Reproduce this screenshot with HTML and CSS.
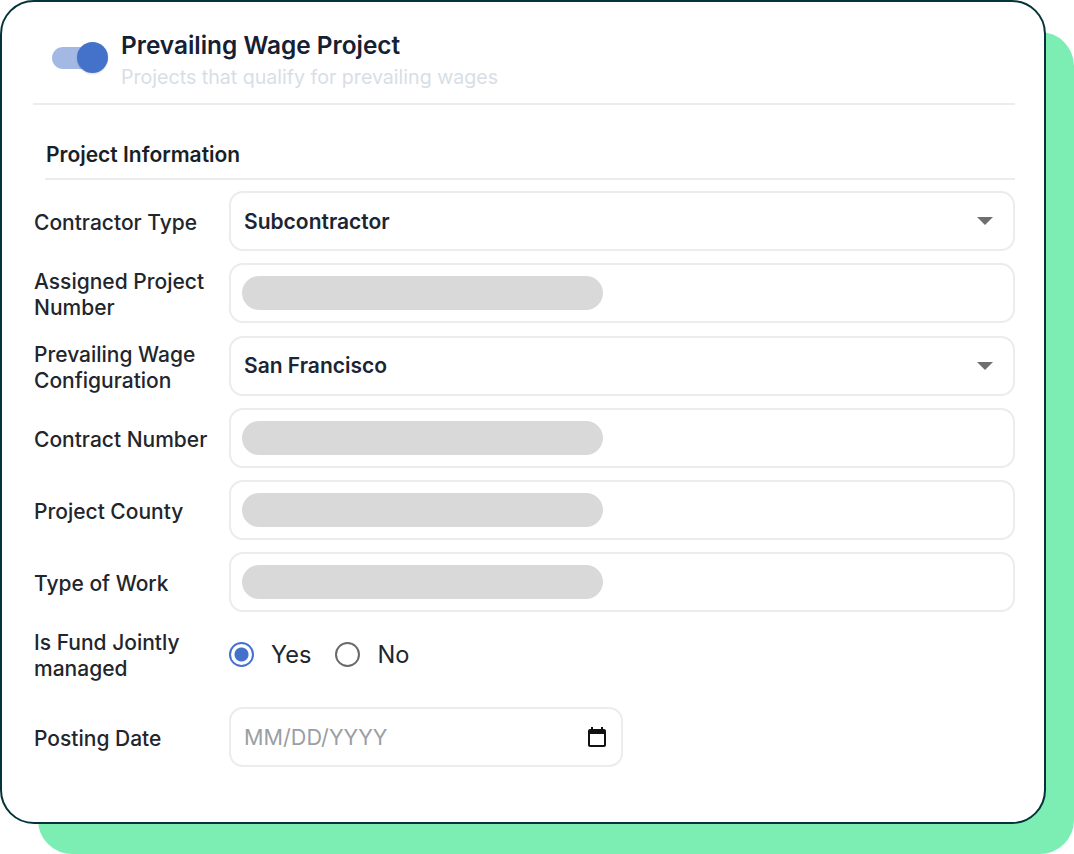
FILE: index.html
```html
<!DOCTYPE html>
<html lang="en">
<head>
<meta charset="utf-8">
<title>Prevailing Wage Project</title>
<link rel="stylesheet" href="styles.css">
</head>
<body>
<div class="stage">
  <div class="backing"></div>
  <div class="card">
    <header class="head">
      <div class="toggle"><span class="track"></span><span class="thumb"></span></div>
      <div class="head-text">
        <div class="title">Prevailing Wage Project</div>
        <div class="subtitle">Projects that qualify for prevailing wages</div>
      </div>
    </header>
    <h2 class="section">Project Information</h2>
    <div class="form">
      <div class="row">
        <div class="label">Contractor Type</div>
        <div class="field"><span class="value">Subcontractor</span><span class="caret"></span></div>
      </div>
      <div class="row">
        <div class="label">Assigned Project Number</div>
        <div class="field masked"><span class="blur"></span></div>
      </div>
      <div class="row">
        <div class="label">Prevailing Wage Configuration</div>
        <div class="field"><span class="value">San Francisco</span><span class="caret"></span></div>
      </div>
      <div class="row">
        <div class="label">Contract Number</div>
        <div class="field masked"><span class="blur"></span></div>
      </div>
      <div class="row">
        <div class="label">Project County</div>
        <div class="field masked"><span class="blur"></span></div>
      </div>
      <div class="row">
        <div class="label">Type of Work</div>
        <div class="field masked"><span class="blur"></span></div>
      </div>
      <div class="row radio-row">
        <div class="label">Is Fund Jointly managed</div>
        <div class="radios">
          <span class="radio on"></span><span class="radio-text">Yes</span>
          <span class="radio"></span><span class="radio-text">No</span>
        </div>
      </div>
      <div class="row">
        <div class="label">Posting Date</div>
        <div class="field date">
          <span class="placeholder">MM/DD/YYYY</span>
          <svg class="cal" width="20" height="20" viewBox="0 0 24 24" aria-hidden="true"><path fill="#111" d="M19 4h-1V2h-2v2H8V2H6v2H5c-1.1 0-2 .9-2 2v14c0 1.1.9 2 2 2h14c1.1 0 2-.9 2-2V6c0-1.1-.9-2-2-2zm0 16H5V9h14v11z"/></svg>
        </div>
      </div>
    </div>
  </div>
</div>
</body>
</html>
```
FILE: styles.css
```css
* { box-sizing: border-box; }
html, body { margin: 0; padding: 0; background: #fff; }
body { font-family: Inter, "Noto Sans", sans-serif; color: #1a1f27; }
.stage { position: relative; width: 1074px; height: 854px; overflow: hidden; }
.backing {
  position: absolute; left: 38px; top: 32px; width: 1036px; height: 822px;
  background: #7ceeb4; border-radius: 34px;
}
.card {
  position: relative; width: 1046px; height: 824px;
  background: #fff; border: 2px solid #04343a; border-radius: 34px;
  padding: 0 29px 0 31px;
}
.head {
  display: flex; align-items: flex-start; gap: 13px;
  height: 103px; padding: 28px 0 0 19px;
  border-bottom: 2px solid #ebecee;
}
.toggle { position: relative; width: 56px; height: 32px; margin-top: 12px; flex: none; }
.track { position: absolute; left: 0; top: 5px; width: 50px; height: 22px; border-radius: 11px; background: #a3b9e4; }
.thumb { position: absolute; left: 25px; top: 0; width: 31px; height: 31px; border-radius: 50%; background: #4472ca; box-shadow: 0 1px 2px rgba(0,0,0,.15); }
.title { font-size: 24.4px; line-height: 30px; font-weight: 600; color: #162033; }
.subtitle { font-size: 19.6px; line-height: 26px; margin-top: 4px; color: #d8dee6; }
.section {
  margin: 0 0 11px 12px; height: 75px; padding: 35px 0 0 1px;
  font-size: 21px; line-height: 30px; font-weight: 600; color: #1a1f27;
  border-bottom: 2px solid #ebecee;
}
.form { display: flex; flex-direction: column; }
.row { display: flex; align-items: center; height: 60px; margin-bottom: 12.3px; }
.label { width: 196px; flex: none; font-size: 21px; line-height: 26px; font-weight: 500; color: #22262c; padding: 4px 12px 0 1px; }
.field {
  flex: 1; height: 60px; display: flex; align-items: center; justify-content: space-between;
  padding: 0 20px 0 13px; border: 2px solid #ebecee; border-radius: 14px; background: #fff;
}
.value { font-size: 21px; font-weight: 600; color: #1c2533; }
.caret { width: 0; height: 0; border-left: 8px solid transparent; border-right: 8px solid transparent; border-top: 8px solid #6f6f6f; }
.masked { padding-left: 11px; }
.blur { width: 361px; height: 34px; border-radius: 17px; background: #d9d9d9; }
.radio-row { height: 60px; margin-bottom: 22px; }
.radio-row .label { padding-top: 2px; }
.radios { display: flex; align-items: center; }
.radio { width: 25px; height: 25px; border-radius: 50%; border: 2px solid #6a6a6a; flex: none; background: #fff; }
.radio.on { border-color: #4472ca; background: radial-gradient(circle, #4472ca 0 6.5px, #fff 7.5px); }
.radio-text { font-size: 23.6px; font-weight: 400; color: #22262c; margin-left: 17px; margin-right: 24px; }
.date { flex: none; width: 394px; padding-right: 12px; padding-left: 13px; }
.placeholder { font-size: 21.6px; font-weight: 400; color: #9b9ea3; }
.cal { flex: none; width: 24px; height: 24px; }
```
